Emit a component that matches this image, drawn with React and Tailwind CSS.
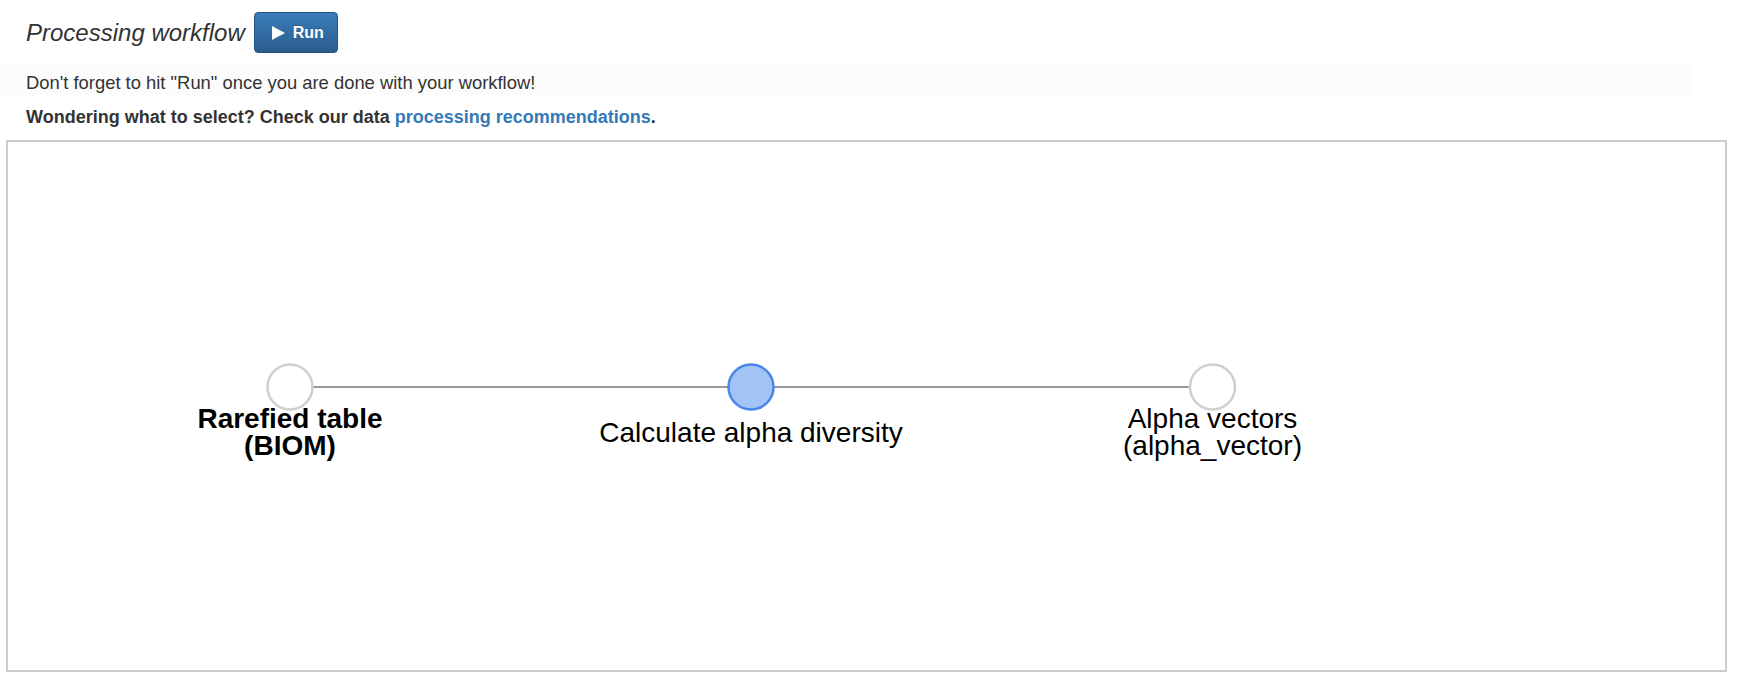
export default function App() {
  const font = { fontFamily: '"Liberation Sans", Arial, sans-serif' };
  return (
    <div className="w-[1762px] h-[686px] bg-white text-[#333] overflow-hidden" style={font}>
      <div className="flex items-center pl-[26px] pt-[12px] h-[53px]">
        <span className="italic text-[24px] leading-[24px] text-[#333]">Processing workflow</span>
        <button className="ml-[9px] flex items-center h-[41px] w-[84px] pl-[17px] rounded-[4px] border border-[#245580] bg-gradient-to-b from-[#3b7dbb] to-[#2a5d8c] text-white font-bold text-[16px] [text-shadow:0_-1px_0_rgba(0,0,0,0.2)]">
          <svg width="13" height="14" viewBox="0 0 13 14" className="mr-[8px]">
            <polygon points="0,0 13,7 0,14" fill="white" />
          </svg>
          Run
        </button>
      </div>
      <div className="mt-[12px] h-[30px] w-[1690px] bg-[#fcfcfc] pt-[5px] pl-[26px] text-[18.4px] leading-[26px]">
        Don't forget to hit "Run" once you are done with your workflow!
      </div>
      <div className="mt-[9px] pl-[26px] text-[18px] leading-[26px] font-bold">
        Wondering what to select? Check our data{" "}
        <a className="text-[#337ab7]">processing recommendations</a>.
      </div>
      <div className="mt-[10px] ml-[6px] w-[1721px] h-[532px] border-2 border-[#cccccc]">
        <svg width="1717" height="528" viewBox="0 0 1717 528" style={font}>
          <line x1="282" y1="245" x2="743" y2="245" stroke="#999" strokeWidth="2" />
          <line x1="743" y1="245" x2="1204.5" y2="245" stroke="#999" strokeWidth="2" />
          <circle cx="282" cy="245" r="22.5" fill="white" stroke="#cfcfcf" strokeWidth="2.5" />
          <circle cx="743" cy="245" r="22.5" fill="#a2c3f6" stroke="#4a86e8" strokeWidth="2.5" />
          <circle cx="1204.5" cy="245" r="22.5" fill="white" stroke="#cfcfcf" strokeWidth="2.5" />
          <text x="282" y="286" textAnchor="middle" fontSize="28" fontWeight="bold" fill="#000">Rarefied table</text>
          <text x="282" y="313" textAnchor="middle" fontSize="28" fontWeight="bold" fill="#000">(BIOM)</text>
          <text x="743" y="300" textAnchor="middle" fontSize="28" fill="#000">Calculate alpha diversity</text>
          <text x="1204.5" y="286" textAnchor="middle" fontSize="28" fill="#000">Alpha vectors</text>
          <text x="1204.5" y="313" textAnchor="middle" fontSize="28" fill="#000">(alpha_vector)</text>
        </svg>
      </div>
    </div>
  );
}
